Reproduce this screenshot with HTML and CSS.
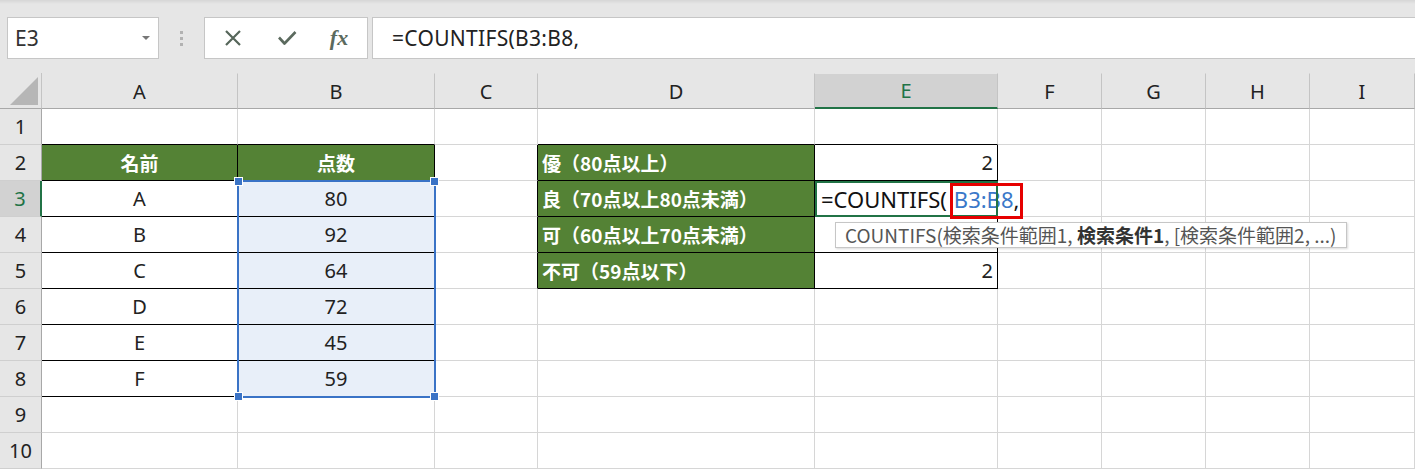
FILE: index.html
```html
<!DOCTYPE html>
<html lang="ja">
<head>
<meta charset="utf-8">
<link rel="stylesheet" href="styles.css">
</head>
<body>
<div class="toolbar">
  <div class="namebox"><span class="nb-text">E3</span><span class="nb-arrow"></span></div>
  <div class="dots"><i></i><i></i><i></i></div>
  <div class="btns">
    <span class="btn"><svg width="18" height="16" viewBox="0 0 18 16"><path d="M2 1 L16 15 M16 1 L2 15" stroke="#56665a" stroke-width="2.2" fill="none"/></svg></span>
    <span class="btn"><svg width="20" height="16" viewBox="0 0 20 16"><path d="M2 7.5 L7.5 13.5 L18.5 2" stroke="#5b6a5e" stroke-width="2.6" fill="none" stroke-linejoin="round"/></svg></span>
    <span class="btn fx">fx</span>
  </div>
  <div class="formula">=COUNTIFS(B3:B8,</div>
</div>
<div class="sheet">
  <div class="grid">
    <div class="corner"><span class="tri"></span></div>
    <div class="ch">A</div><div class="ch">B</div><div class="ch">C</div><div class="ch">D</div><div class="ch sel">E</div><div class="ch">F</div><div class="ch">G</div><div class="ch">H</div><div class="ch">I</div>

    <div class="rh">1</div><div class="c bt"></div><div class="c bt"></div><div class="c"></div><div class="c bt"></div><div class="c bt"></div><div class="c"></div><div class="c"></div><div class="c"></div><div class="c"></div>

    <div class="rh">2</div><div class="c bk hd">名前</div><div class="c bk hd">点数</div><div class="c bl"></div><div class="c bk lab">優（80点以上）</div><div class="c bk num">2</div><div class="c"></div><div class="c"></div><div class="c"></div><div class="c"></div>

    <div class="rh sel">3</div><div class="c bk ctr">A</div><div class="c bk ctr pick">80</div><div class="c bl"></div><div class="c bk lab">良（70点以上80点未満）</div><div class="c bk edit">=COUNTIFS(<span class="ref">B3:B8</span>,</div><div class="c"></div><div class="c"></div><div class="c"></div><div class="c"></div>

    <div class="rh">4</div><div class="c bk ctr">B</div><div class="c bk ctr pick">92</div><div class="c bl"></div><div class="c bk lab">可（60点以上70点未満）</div><div class="c bk"></div><div class="c"></div><div class="c"></div><div class="c"></div><div class="c"></div>

    <div class="rh">5</div><div class="c bk ctr">C</div><div class="c bk ctr pick">64</div><div class="c bl"></div><div class="c bk lab">不可（59点以下）</div><div class="c bk num">2</div><div class="c"></div><div class="c"></div><div class="c"></div><div class="c"></div>

    <div class="rh">6</div><div class="c bk ctr">D</div><div class="c bk ctr pick">72</div><div class="c"></div><div class="c"></div><div class="c"></div><div class="c"></div><div class="c"></div><div class="c"></div><div class="c"></div>

    <div class="rh">7</div><div class="c bk ctr">E</div><div class="c bk ctr pick">45</div><div class="c"></div><div class="c"></div><div class="c"></div><div class="c"></div><div class="c"></div><div class="c"></div><div class="c"></div>

    <div class="rh">8</div><div class="c bk ctr">F</div><div class="c bk ctr pick">59</div><div class="c"></div><div class="c"></div><div class="c"></div><div class="c"></div><div class="c"></div><div class="c"></div><div class="c"></div>

    <div class="rh">9</div><div class="c"></div><div class="c"></div><div class="c"></div><div class="c"></div><div class="c"></div><div class="c"></div><div class="c"></div><div class="c"></div><div class="c"></div>

    <div class="rh">10</div><div class="c"></div><div class="c"></div><div class="c"></div><div class="c"></div><div class="c"></div><div class="c"></div><div class="c"></div><div class="c"></div><div class="c"></div>
  </div>
  <div class="selbox">
    <span class="h h1"></span><span class="h h2"></span><span class="h h3"></span><span class="h h4"></span>
  </div>
  <div class="redbox"></div>
  <div class="tip">COUNTIFS(検索条件範囲1, <b>検索条件1</b>, [検索条件範囲2, ...)</div>
</div>
</body>
</html>
```

FILE: styles.css
```css
* { box-sizing: border-box; }
html, body { margin: 0; padding: 0; }
body {
  width: 1415px;
  height: 470px;
  overflow: hidden;
  background: #ffffff;
  font-family: "Noto Sans CJK JP", "Noto Sans", sans-serif;
  color: #222;
}

.toolbar {
  height: 73px;
  background: linear-gradient(#d6d6d6 0, #e6e6e6 4px, #e6e6e6 100%);
  display: flex;
  align-items: flex-start;
  padding: 17px 0 0 7px;
}
.namebox {
  width: 152px;
  height: 42px;
  background: #fff;
  border: 1px solid #c6c6c6;
  display: flex;
  align-items: center;
  justify-content: space-between;
  padding: 0 8px 0 7px;
}
.nb-text { font-size: 21px; color: #333; font-family: "Noto Sans", sans-serif; }
.nb-arrow {
  width: 0; height: 0;
  border-left: 4px solid transparent;
  border-right: 4px solid transparent;
  border-top: 4px solid #777;
}
.dots {
  width: 45px;
  height: 42px;
  display: flex;
  flex-direction: column;
  align-items: center;
  justify-content: center;
  gap: 3px;
}
.dots i { width: 3px; height: 3px; background: #b2b2b2; display: block; }
.btns {
  width: 164px;
  height: 42px;
  background: #fff;
  border: 1px solid #c6c6c6;
  display: flex;
  align-items: center;
  padding-left: 1px;
}
.btn {
  width: 54px;
  display: flex;
  justify-content: center;
  align-items: center;
}
.fx {
  font-family: "Liberation Serif", serif;
  font-style: italic;
  font-weight: bold;
  font-size: 22px;
  color: #5b6a5e;
  margin-left: -2px;
}
.formula {
  margin-left: 4px;
  flex: 1;
  height: 42px;
  background: #fff;
  border: 1px solid #c6c6c6;
  border-right: none;
  font-size: 21px;
  line-height: 40px;
  padding-left: 19px;
  letter-spacing: 0.3px;
  color: #222;
  font-family: "Noto Sans", sans-serif;
}

.sheet { position: relative; }
.grid {
  display: grid;
  grid-template-columns: 42px 196px 197px 103px 277px 183px 104px 104px 104px 105px;
  grid-template-rows: repeat(11, 36px);
  background: #fff;
}
.corner {
  background: #e6e6e6;
  border-right: 1px solid #c4c4c4;
  border-bottom: 1px solid #a8a8a8;
  position: relative;
}
.tri {
  position: absolute;
  right: 3px;
  bottom: 3px;
  width: 0; height: 0;
  border-left: 28px solid transparent;
  border-bottom: 28px solid #b6b6b6;
}
.ch {
  background: #e6e6e6;
  border-right: 1px solid #c4c4c4;
  border-top: 1px solid #e6e6e6;
  border-bottom: 1px solid #a8a8a8;
  display: flex;
  align-items: center;
  justify-content: center;
  font-size: 20px;
  font-family: "Noto Sans", sans-serif;
  color: #222;
}
.ch.sel {
  background: #d2d2d2;
  color: #217346;
  border-bottom: 2px solid #217346;
}
.rh {
  background: #e6e6e6;
  border-right: 1px solid #a8a8a8;
  border-bottom: 1px solid #cfcfcf;
  display: flex;
  align-items: center;
  justify-content: center;
  font-size: 20px;
  font-family: "Noto Sans", sans-serif;
  color: #222;
}
.rh.sel {
  background: #d2d2d2;
  color: #217346;
  border-right: 2px solid #217346;
}
.c {
  border-right: 1px solid #d6d6d6;
  border-bottom: 1px solid #d6d6d6;
  display: flex;
  align-items: center;
  font-size: 19px;
  white-space: nowrap;
}
.bk { border-right-color: #000; border-bottom-color: #000; }
.bt { border-bottom-color: #000; }
.bl { border-right-color: #000; }
.hd {
  background: #548235;
  color: #fff;
  font-weight: bold;
  justify-content: center;
}
.lab {
  background: #548235;
  color: #fff;
  font-weight: bold;
  padding-left: 4px;
}
.num { justify-content: flex-end; padding-right: 4px; font-family: "Noto Sans", sans-serif; font-size: 20px; }
.ctr { justify-content: center; font-family: "Noto Sans", sans-serif; font-size: 20px; }
.pick { background: #e8eff9; }
.edit {
  outline: 2px solid #217346;
  outline-offset: -2px;
  padding-left: 6px;
  overflow: visible;
  font-size: 22px;
  letter-spacing: 0;
  font-family: "Noto Sans", sans-serif;
  color: #111;
  position: relative;
  z-index: 1;
}
.ref { color: #3a78c9; margin-left: 7px; }

.selbox {
  position: absolute;
  left: 237px;
  top: 107px;
  width: 199px;
  height: 218px;
  border: 2px solid #3a73c6;
  pointer-events: none;
}
.h {
  position: absolute;
  width: 7px;
  height: 7px;
  background: #3a73c6;
  outline: 1px solid #fff;
}
.h1 { left: -4px; top: -4px; }
.h2 { right: -4px; top: -4px; }
.h3 { left: -4px; bottom: -4px; }
.h4 { right: -4px; bottom: -4px; }

.redbox {
  position: absolute;
  left: 950px;
  top: 110px;
  width: 73px;
  height: 36px;
  border: 3px solid #e60000;
  z-index: 2;
}
.tip {
  position: absolute;
  left: 835px;
  top: 149px;
  width: 512px;
  height: 26px;
  background: #fff;
  border: 1px solid #c6c6c6;
  box-shadow: 1px 1px 2px rgba(0,0,0,0.15);
  font-size: 19px;
  line-height: 24px;
  padding-left: 9px;
  color: #555;
  white-space: nowrap;
  z-index: 3;
}
.tip b { color: #333; }
```
